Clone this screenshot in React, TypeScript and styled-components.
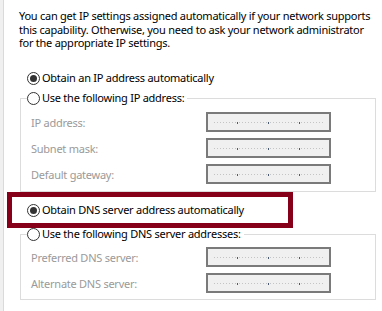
import styled, { createGlobalStyle } from "styled-components";

const GlobalStyle = createGlobalStyle`
  html, body {
    margin: 0;
    padding: 0;
    background: #f0f0f0;
  }
  body {
    font-family: "Noto Sans", "Open Sans", sans-serif;
    font-size: 11px;
    letter-spacing: -0.25px;
    color: #000;
  }
`;

const Window = styled.div`
  width: 382px;
  height: 311px;
  overflow: hidden;
  background: #f0f0f0;
  padding-left: 3px;
  box-sizing: border-box;
`;

const Page = styled.div`
  height: 100%;
  background: #fff;
  border-left: 1px solid #dadada;
  padding-top: 9px;
  box-sizing: border-box;
`;

const Intro = styled.p`
  margin: 0 0 0 15px;
  height: 41px;
  line-height: 13.5px;
  white-space: nowrap;
`;

const RadioRow = styled.label<{ $indent?: number }>`
  display: flex;
  align-items: center;
  height: 14px;
  line-height: 14px;
  margin-left: ${(p) => p.$indent ?? 0}px;
  white-space: nowrap;
`;

const Circle = styled.span<{ $checked?: boolean }>`
  position: relative;
  width: 13px;
  height: 13px;
  box-sizing: border-box;
  border-radius: 50%;
  border: 1px solid #333;
  background: #fff;
  margin-right: 2px;
  flex: none;

  &::after {
    content: "";
    display: ${(p) => (p.$checked ? "block" : "none")};
    position: absolute;
    left: 2px;
    top: 2px;
    width: 7px;
    height: 7px;
    border-radius: 50%;
    background: #333;
  }
`;

const FirstRadio = styled.div`
  margin-top: 21px;
`;

const Group = styled.fieldset<{ $top: number; $pt: number; $pb: number }>`
  margin: ${(p) => p.$top}px 0 0 16px;
  width: 356px;
  box-sizing: border-box;
  border: 1px solid #dcdcdc;
  padding: ${(p) => p.$pt}px 0 ${(p) => p.$pb}px 6px;
  display: flex;
  flex-direction: column;
  gap: 6px;
`;

const Legend = styled.legend`
  padding: 0 3px 0 0;
  margin: 0;
`;

const FieldRow = styled.div`
  display: grid;
  grid-template-columns: 179px 125px;
  align-items: center;
  height: 20px;
`;

const FieldLabel = styled.span`
  padding-left: 4px;
  color: #9a9a9a;
  white-space: nowrap;
`;

const IpBox = styled.div`
  height: 20px;
  box-sizing: border-box;
  border: 2px solid #7a7a7a;
  background: #f0f0f0;
  display: flex;
  align-items: center;
  padding-left: 6px;
`;

const Segment = styled.span<{ $w?: number }>`
  height: 1px;
  width: ${(p) => (p.$w ? `${p.$w}px` : "auto")};
  flex: ${(p) => (p.$w ? "none" : "1")};
  margin-right: ${(p) => (p.$w ? "0" : "4px")};
  background: repeating-linear-gradient(90deg, #c4c4c4 0 1px, transparent 1px 3px);
`;

const Dot = styled.span`
  width: 1px;
  height: 2px;
  margin-top: 2px;
  margin-right: 1px;
  background: #4a5a70;
  flex: none;
`;

const Highlight = styled.div`
  margin-left: 3px;
  width: 286px;
  height: 36px;
  box-sizing: border-box;
  border: 5px solid #860019;
  display: flex;
  align-items: center;
  padding-left: 15px;
`;

const Radio = ({ label, checked }: { label: string; checked?: boolean }) => (
  <RadioRow>
    <Circle $checked={checked} />
    {label}
  </RadioRow>
);

const IpField = () => (
  <IpBox>
    <Segment $w={23} />
    <Dot />
    <Segment $w={29} />
    <Dot />
    <Segment $w={29} />
    <Dot />
    <Segment />
  </IpBox>
);

const Field = ({ label }: { label: string }) => (
  <FieldRow>
    <FieldLabel>{label}</FieldLabel>
    <IpField />
  </FieldRow>
);

export default function App() {
  return (
    <>
      <GlobalStyle />
      <Window>
        <Page>
          <Intro>
            You can get IP settings assigned automatically if your network supports
            <br />
            this capability. Otherwise, you need to ask your network administrator
            <br />
            for the appropriate IP settings.
          </Intro>

          <FirstRadio>
            <RadioRow $indent={23}>
              <Circle $checked />
              Obtain an IP address automatically
            </RadioRow>
          </FirstRadio>

          <Group $top={6} $pt={7} $pb={7}>
            <Legend>
              <Radio label="Use the following IP address:" />
            </Legend>
            <Field label="IP address:" />
            <Field label="Subnet mask:" />
            <Field label="Default gateway:" />
          </Group>

          <Highlight>
            <Radio label="Obtain DNS server address automatically" checked />
          </Highlight>

          <Group $top={-1} $pt={6} $pb={6}>
            <Legend>
              <Radio label="Use the following DNS server addresses:" />
            </Legend>
            <Field label="Preferred DNS server:" />
            <Field label="Alternate DNS server:" />
          </Group>
        </Page>
      </Window>
    </>
  );
}
